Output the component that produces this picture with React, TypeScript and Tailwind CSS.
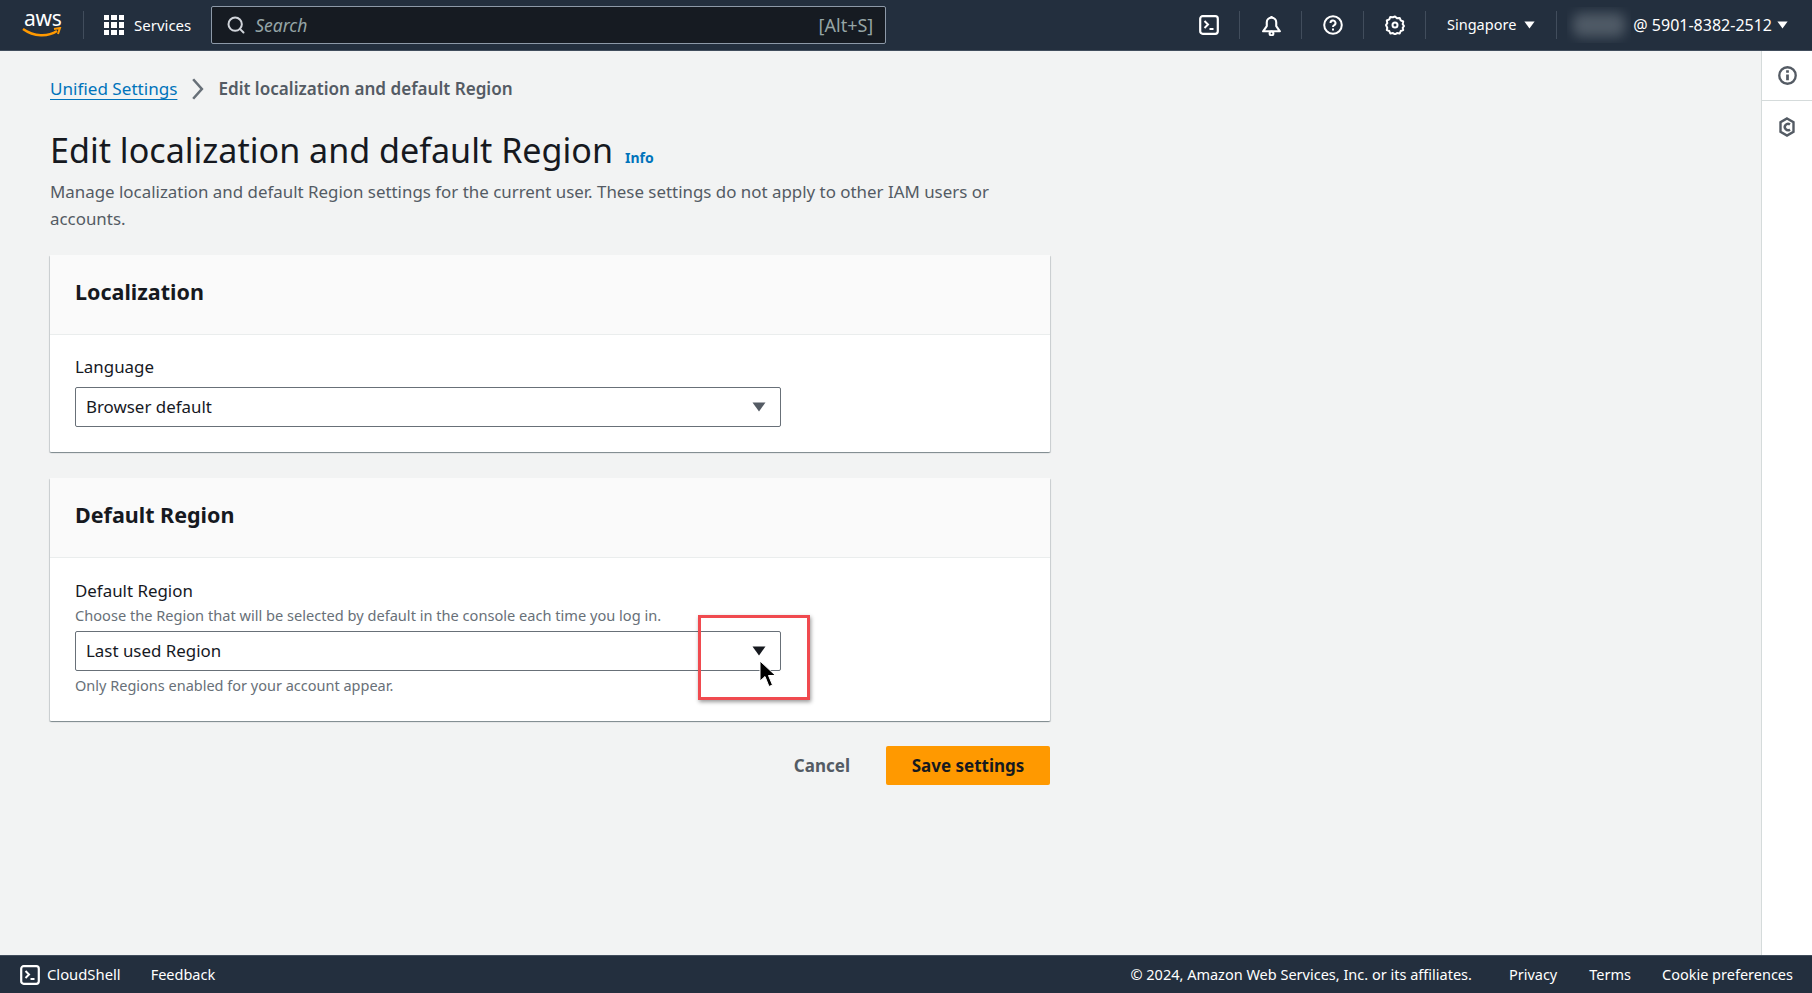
import { Search } from "lucide-react";

const font = { fontFamily: '"Noto Sans", sans-serif' };

function ShellIcon({ className }: { className?: string }) {
  return (
    <svg className={className} viewBox="0 0 20 20" fill="none" stroke="currentColor">
      <rect x="1.2" y="1.2" width="17.6" height="17.6" rx="2.5" strokeWidth="2.2" />
      <path d="M5.5 6l3.5 3.5-3.5 3.5M10.5 14h4" strokeWidth="2" />
    </svg>
  );
}

function Caret({ className }: { className?: string }) {
  return (
    <svg className={className} viewBox="0 0 14 10" fill="currentColor">
      <path d="M0.5 0.5h13L7 9.5z" />
    </svg>
  );
}

function Divider() {
  return <div className="w-px h-[28px] bg-[#414d5c]" />;
}

function TopNav() {
  return (
    <header className="h-[51px] shrink-0 bg-[#232f3e] border-b border-[#414d5c] flex items-center text-white">
      <div className="relative ml-[22px] w-[40px] h-[26px]">
        <span className="absolute left-[2px] top-[-8px] text-[21px] leading-[28px] tracking-[-0.3px]">aws</span>
        <svg className="absolute left-0 top-[15px] w-[40px] h-[11px]" viewBox="0 0 40 11" fill="none">
          <path d="M1 2c11 8 25 8 34 2" stroke="#ff9900" strokeWidth="2.4" />
          <path d="M32 2l6-1-2 6" stroke="#ff9900" strokeWidth="2" />
        </svg>
      </div>
      <div className="ml-[21px] w-px h-[28px] bg-[#414d5c]" />
      <div className="ml-[20px] grid grid-cols-3 gap-[2px] w-[20px] h-[20px]">
        {Array.from({ length: 9 }).map((_, i) => (
          <span key={i} className="bg-white w-[5.33px] h-[5.33px]" />
        ))}
      </div>
      <span className="ml-[10px] text-[15px]">Services</span>
      <div className="ml-[20px] w-[675px] h-[38px] rounded-[2px] border border-[#8d99a8] bg-[#161b22] flex items-center pl-[14px] pr-[12px]">
        <Search className="w-[20px] h-[20px] text-[#d1d5db]" strokeWidth={2.4} />
        <span className="ml-[9px] italic text-[17.500px] text-[#95a5a6]">Search</span>
        <span className="ml-auto text-[18px] text-[#95a5a6]">[Alt+S]</span>
      </div>
      <div className="ml-auto flex items-center h-full">
        <ShellIcon className="w-[20px] h-[20px] mr-[20px]" />
        <Divider />
        <svg className="w-[19px] h-[21px] ml-[22px] mr-[20px]" viewBox="0 0 18 20" fill="none" stroke="currentColor" strokeWidth="2">
          <path d="M1 15.500h16l-3.500-5V7a4.500 4.500 0 0 0-9 0v3.500zM9 1v2" strokeLinejoin="round" />
          <circle cx="9" cy="17.500" r="1.800" />
        </svg>
        <Divider />
        <svg className="w-[20px] h-[20px] ml-[21px] mr-[20px]" viewBox="0 0 20 20" fill="none" stroke="currentColor" strokeWidth="2">
          <circle cx="10" cy="10" r="8.800" />
          <path d="M7.500 8a2.500 2.500 0 1 1 3.500 2.300c-.7.4-1 .9-1 1.700M10 13.500v2" />
        </svg>
        <Divider />
        <svg className="w-[20px] h-[20px] ml-[21px] mr-[20px]" viewBox="0 0 20 20" fill="none" stroke="currentColor" strokeWidth="2">
          <path d="M10 1.500l2 1.800 2.700-.4 1 2.500 2.500 1.100-.5 2.700 1.300 1.800-1.300 1.800.5 2.200-2.500 1-1 2.500-2.700-.4-2 1.300-2-1.300-2.700.4-1-2.500-2.500-1 .5-2.200L1 10l1.300-1.800-.5-2.700 2.500-1.100 1-2.500 2.700.4z" strokeLinejoin="round" />
          <circle cx="10" cy="10" r="2.500" />
        </svg>
        <Divider />
        <span className="ml-[21px] text-[14.500px]">Singapore</span>
        <Caret className="w-[11px] h-[8px] ml-[8px] mr-[21px]" />
        <Divider />
        <div className="ml-[10px] w-[64px] h-[36px] flex items-center justify-center overflow-hidden">
          <div className="w-[52px] h-[24px] rounded-[8px] bg-[#4f5a66] blur-[6px]" />
        </div>
        <span className="ml-[2px] text-[16px]">@ 5901-8382-2512</span>
        <Caret className="w-[11px] h-[8px] ml-[5px] mr-[24px]" />
      </div>
    </header>
  );
}

function Card({ title, children }: { title: string; children: React.ReactNode }) {
  return (
    <section className="bg-white rounded-[1px] shadow-[0_1px_1px_0_rgba(0,28,36,0.3),1px_1px_1px_0_rgba(0,28,36,0.15),-1px_1px_1px_0_rgba(0,28,36,0.15)]">
      <div className="h-[80px] bg-[#fafafa] border-b border-[#eaeded] flex items-center px-[25px] pb-[5px]">
        <h2 className="text-[21.500px] font-bold text-[#16191f]">{title}</h2>
      </div>
      <div className="px-[25px]">{children}</div>
    </section>
  );
}

function SelectBox({ label, caret }: { label: string; caret: string }) {
  return (
    <div className="w-[706px] h-[40px] border border-[#687078] rounded-[2px] bg-white flex items-center pl-[10px] pr-[14px]">
      <span className="text-[16.900px] text-[#16191f]">{label}</span>
      <span className={"ml-auto " + caret}>
        <Caret className="w-[14px] h-[10px]" />
      </span>
    </div>
  );
}

export default function App() {
  return (
    <div className="h-[993px] flex flex-col bg-[#f2f3f3] overflow-hidden" style={font}>
      <TopNav />
      <div className="flex-1 flex min-h-0">
        <main className="flex-1 pl-[50px] pt-[26px]">
          <div className="w-[1000px]">
            <nav className="flex items-center text-[17.100px] h-[24px]">
              <span className="text-[#0073bb] underline underline-offset-[4px]">Unified Settings</span>
              <svg className="w-[13px] h-[22px] mx-[14px] text-[#687078]" viewBox="0 0 12 20" fill="none" stroke="currentColor" strokeWidth="2.4">
                <path d="M2 1l8 9-8 9" />
              </svg>
              <span className="font-semibold text-[#545b64]">Edit localization and default Region</span>
            </nav>
            <div className="mt-[24px] flex items-baseline">
              <h1 className="text-[34.100px] leading-[50px] text-[#16191f]">Edit localization and default Region</h1>
              <span className="ml-[12px] text-[14px] font-bold text-[#0073bb]">Info</span>
            </div>
            <p className="text-[16.900px] leading-[27px] text-[#545b64] mt-[3px]">
              Manage localization and default Region settings for the current user. These settings do not apply to other IAM users or accounts.
            </p>
            <div className="mt-[23px] flex flex-col gap-[26px]">
              <Card title="Localization">
                <div className="pt-[20px] pb-[25px]">
                  <div className="text-[16.900px] leading-[24px] text-[#16191f] mb-[8px]">Language</div>
                  <SelectBox label="Browser default" caret="text-[#545b64]" />
                </div>
              </Card>
              <Card title="Default Region">
                <div className="relative pt-[21px] pb-[26px]">
                  <div className="text-[16.900px] leading-[24px] text-[#16191f] mb-[2px]">Default Region</div>
                  <div className="text-[14.600px] leading-[20px] text-[#687078] mb-[6px]">
                    Choose the Region that will be selected by default in the console each time you log in.
                  </div>
                  <SelectBox label="Last used Region" caret="text-[#16191f]" />
                  <div className="text-[14.500px] leading-[20px] text-[#687078] mt-[4px]">Only Regions enabled for your account appear.</div>
                  <div className="absolute left-[623px] top-[57px] w-[112px] h-[85px] border-[3px] border-[#f04a4f] shadow-[1px_2px_4px_rgba(0,0,0,0.4)]" />
                  <svg className="absolute left-[684px] top-[102px] w-[17px] h-[28px]" viewBox="0 0 17 28">
                    <path d="M1 1v20l5-4.500 4 10 3.500-1.500-4-9.500h7z" fill="#000" stroke="#fff" strokeWidth="1" />
                  </svg>
                </div>
              </Card>
            </div>
            <div className="mt-[25px] flex items-center justify-end">
              <span className="text-[17px] font-bold text-[#545b64] mr-[36px]">Cancel</span>
              <div className="w-[164px] h-[39px] rounded-[2px] bg-[#ff9900] flex items-center justify-center text-[17px] font-bold text-[#16191f]">
                Save settings
              </div>
            </div>
          </div>
        </main>
        <aside className="w-[51px] bg-white border-l border-[#d5dbdb]">
          <div className="h-[50px] border-b border-[#d5dbdb] flex items-center justify-center text-[#545b64]">
            <svg className="w-[19px] h-[19px]" viewBox="0 0 18 18" fill="none" stroke="currentColor" strokeWidth="2.200">
              <circle cx="9" cy="9" r="7.800" />
              <path d="M9 8v5.500M9 4v2.500" strokeWidth="2.600" />
            </svg>
          </div>
          <div className="h-[52px] flex items-center justify-center text-[#545b64]">
            <svg className="w-[18px] h-[20px]" viewBox="0 0 16 20" fill="none" stroke="currentColor" strokeWidth="2.400">
              <path d="M8 1.500l6.500 3.800v9.400L8 18.500l-6.500-3.800V5.300z" />
              <path d="M11 7.500a3.200 3.200 0 1 0 0 5" />
            </svg>
          </div>
        </aside>
      </div>
      <footer className="h-[38px] shrink-0 bg-[#232f3e] border-t border-[#414d5c] flex items-center text-white">
        <ShellIcon className="ml-[20px] w-[20px] h-[20px]" />
        <span className="ml-[7px] text-[14.800px]">CloudShell</span>
        <span className="ml-[30px] text-[14.500px]">Feedback</span>
        <span className="ml-auto text-[14.500px]">© 2024, Amazon Web Services, Inc. or its affiliates.</span>
        <span className="ml-[37px] text-[14.500px]">Privacy</span>
        <span className="ml-[32px] text-[14.500px]">Terms</span>
        <span className="ml-[31px] mr-[19px] text-[14.500px]">Cookie preferences</span>
      </footer>
    </div>
  );
}
